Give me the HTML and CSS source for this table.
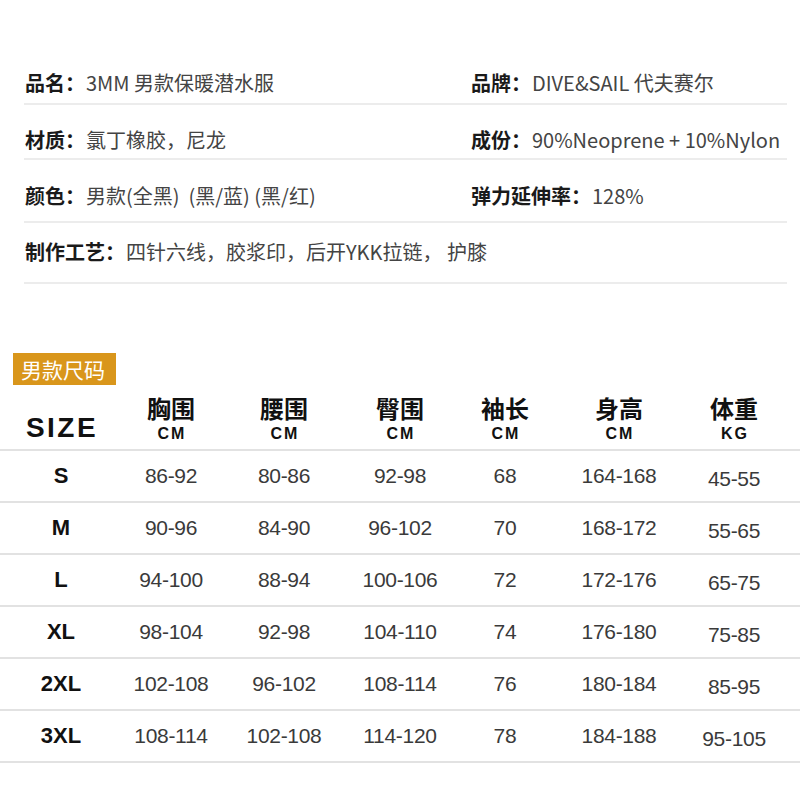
FILE: index.html
```html
<!DOCTYPE html>
<html lang="zh">
<head>
<meta charset="utf-8">
<link rel="stylesheet" href="styles.css">
</head>
<body>
<section class="info">
  <div class="info-row r1">
    <div class="cell"><span class="lbl">品名：</span><span class="val">3MM 男款保暖潜水服</span></div>
    <div class="cell right"><span class="lbl">品牌：</span><span class="val">DIVE&amp;SAIL 代夫赛尔</span></div>
  </div>
  <div class="info-row r2">
    <div class="cell"><span class="lbl">材质：</span><span class="val">氯丁橡胶，尼龙</span></div>
    <div class="cell right"><span class="lbl">成份：</span><span class="val">90%Neoprene + 10%Nylon</span></div>
  </div>
  <div class="info-row r3">
    <div class="cell"><span class="lbl">颜色：</span><span class="val">男款(全黑)&nbsp;&nbsp;(黑/蓝) (黑/红)</span></div>
    <div class="cell right"><span class="lbl">弹力延伸率：</span><span class="val">128%</span></div>
  </div>
  <div class="info-row r4">
    <div class="cell wide"><span class="lbl">制作工艺：</span><span class="val">四针六线，胶浆印，后开YKK拉链，&nbsp;护膝</span></div>
  </div>
</section>

<div class="badge">男款尺码</div>

<section class="size-table">
  <div class="row head">
    <div class="h-size">SIZE</div>
    <div class="h"><span class="zh">胸围</span><span class="unit">CM</span></div>
    <div class="h"><span class="zh">腰围</span><span class="unit">CM</span></div>
    <div class="h"><span class="zh">臀围</span><span class="unit">CM</span></div>
    <div class="h"><span class="zh">袖长</span><span class="unit">CM</span></div>
    <div class="h"><span class="zh">身高</span><span class="unit">CM</span></div>
    <div class="h"><span class="zh">体重</span><span class="unit">KG</span></div>
  </div>
  <div class="row"><div class="sz">S</div><div>86-92</div><div>80-86</div><div>92-98</div><div>68</div><div>164-168</div><div class="kg">45-55</div></div>
  <div class="row"><div class="sz">M</div><div>90-96</div><div>84-90</div><div>96-102</div><div>70</div><div>168-172</div><div class="kg">55-65</div></div>
  <div class="row"><div class="sz">L</div><div>94-100</div><div>88-94</div><div>100-106</div><div>72</div><div>172-176</div><div class="kg">65-75</div></div>
  <div class="row"><div class="sz">XL</div><div>98-104</div><div>92-98</div><div>104-110</div><div>74</div><div>176-180</div><div class="kg">75-85</div></div>
  <div class="row"><div class="sz">2XL</div><div>102-108</div><div>96-102</div><div>108-114</div><div>76</div><div>180-184</div><div class="kg">85-95</div></div>
  <div class="row"><div class="sz">3XL</div><div>108-114</div><div>102-108</div><div>114-120</div><div>78</div><div>184-188</div><div class="kg">95-105</div></div>
</section>
</body>
</html>
```

FILE: styles.css
```css
* { box-sizing: border-box; }
html, body { margin: 0; padding: 0; background: #fff; }
body {
  width: 800px;
  height: 800px;
  overflow: hidden;
  font-family: "Noto Sans CJK SC", "Noto Sans", sans-serif;
  color: #222;
}

.info {
  padding: 50px 13px 0 24px;
}
.info-row {
  display: flex;
  border-bottom: 2px solid #ececec;
  font-size: 20px;
  line-height: 26px;
}
.r1 { padding: 20px 0 7px; }
.r2 { padding: 22px 0 5px; }
.r3 { padding: 23px 0 12px; }
.r4 { padding: 16px 0 17px; }

.cell { display: flex; align-items: baseline; white-space: nowrap; }
.cell:first-child { width: 447px; padding-left: 1px; }
.cell.wide { width: auto; }
.lbl { font-weight: 700; color: #1a1a1a; }
.val { color: #444; font-weight: 400; padding-left: 1px; }

.badge {
  margin: 69px 0 0 13px;
  width: 103px;
  height: 32px;
  background: #d9961b;
  color: #fff;
  font-size: 21px;
  line-height: 32px;
  padding-left: 8px;
  font-weight: 400;
  white-space: nowrap;
}

.size-table {
  font-family: "Liberation Sans", Arial, sans-serif;
}
.row {
  display: grid;
  grid-template-columns: 122px 98px 128px 104px 106px 122px 108px;
  height: 52px;
  border-bottom: 2px solid #e2e2e2;
  align-items: center;
  text-align: center;
  font-size: 21px;
  color: #3a3a3a;
  letter-spacing: -0.3px;
}
.row.head {
  height: 66px;
  align-items: start;
  color: #111;
  letter-spacing: 0;
}
.h {
  display: flex;
  flex-direction: column;
  align-items: center;
  padding-top: 9px;
}
.zh {
  font-family: "Noto Sans CJK SC", sans-serif;
  font-weight: 700;
  font-size: 24px;
  line-height: 28px;
}
.unit {
  font-weight: 700;
  font-size: 16px;
  line-height: 18px;
  letter-spacing: 2px;
  margin-top: 3px;
  padding-left: 2px;
}
.h-size {
  padding-top: 27px;
  font-size: 28px;
  line-height: 32px;
  font-weight: 700;
  letter-spacing: 2.5px;
  padding-left: 2px;
}
.sz {
  font-weight: 700;
  font-size: 22px;
  color: #111;
  letter-spacing: 0;
}
.kg { padding-top: 5px; }
```
